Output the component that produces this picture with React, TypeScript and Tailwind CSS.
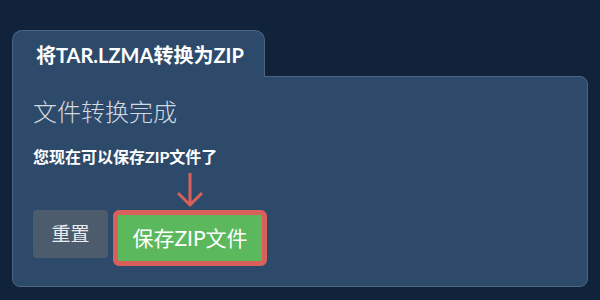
const font = { fontFamily: "Lato, 'Noto Sans CJK SC', sans-serif" };

export default function App() {
  return (
    <div className="w-[600px] h-[300px] bg-[#10233a] pt-[30px] pl-[12px]" style={font}>
      <div className="w-[576px] flex flex-col">
        <div className="relative z-10 self-start w-[253px] -mb-px bg-[#2d4a6a] border border-b-0 border-[#4b6587] rounded-t-[10px] pl-[23px] pt-[10px] pb-[8px]">
          <div className="text-[20px] leading-[28px] font-bold text-white">将TAR.LZMA转换为ZIP</div>
        </div>
        <div className="bg-[#2d4a6a] border border-[#4b6587] rounded-tr-[8px] rounded-b-[8px] px-[20px] pt-[19px] pb-[20px]">
          <div className="text-[24px] leading-8 font-light text-[#d3d9e1]">文件转换完成</div>
          <div className="mt-[18px] text-[16px] leading-[22px] font-bold text-white">您现在可以保存ZIP文件了</div>
          <div className="relative mt-[42px] flex items-start gap-[5px]">
            <button className="w-[75px] h-[48px] rounded-[4px] bg-[#4c5c6d] text-[19px] text-[#e8ecf0]">重置</button>
            <div className="relative">
              <svg className="absolute left-1/2 -translate-x-1/2 -top-[38px]" width="30" height="36" viewBox="0 0 30 36">
                <path d="M15 1 V33 M3 21 L15 33 L27 21" fill="none" stroke="#d9605a" strokeWidth="3" />
              </svg>
              <button className="w-[154px] h-[56px] rounded-[6px] border-[5px] border-[#d9605a] bg-[#5cb85c] text-[21px] text-white">保存ZIP文件</button>
            </div>
          </div>
        </div>
      </div>
    </div>
  );
}
